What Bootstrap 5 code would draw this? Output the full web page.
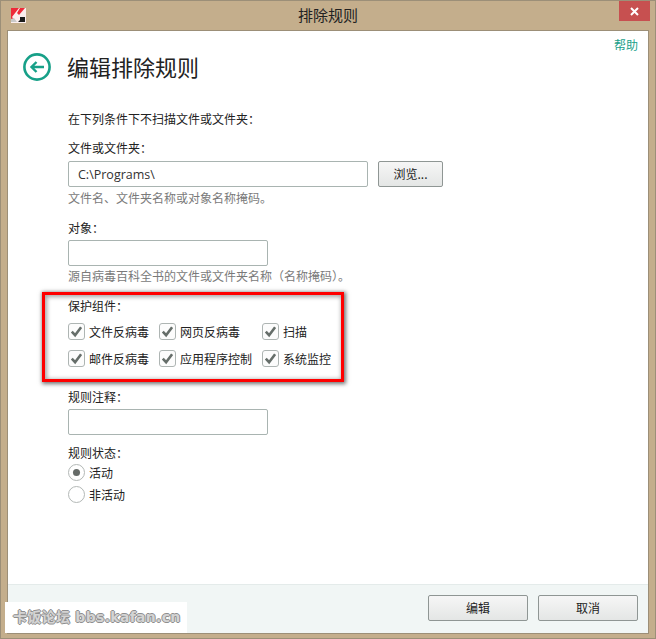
<!DOCTYPE html>
<html lang="zh">
<head>
<meta charset="utf-8">
<title>排除规则</title>
<link rel="stylesheet" href="https://cdn.jsdelivr.net/npm/bootstrap@5.3.0/dist/css/bootstrap.min.css">
<style>
  html, body { width: 656px; height: 639px; overflow: hidden; margin: 0; }
  body { font: 12px/16px "Noto Sans CJK SC", "Liberation Sans", sans-serif; color: #222; background: #c4ae8c; }
  .win-frame { position: relative; width: 656px; height: 639px; border: 1px solid #9c8f78; background: #c4ae8c; }
  .win-title { height: 29px; padding-left: 10px; }
  .win-title svg.logo { margin-top: 7px; }
  .win-title .cap { flex: 1; text-align: center; font-size: 15px; line-height: 27px; color: #222; padding-left: 11px; }
  .close-x { width: 31px; height: 20px; margin: 0 5px 0 0; background: #c75050; align-self: flex-start; }
  .client { width: 642px; height: 604px; margin-left: 6px; background: #fff; border: 1px solid #9c8f78; }
  .client-body { flex: 1; position: relative; padding: 0 10px 0 15px; }
  .help-link { color: #1a9f8a; text-decoration: none; line-height: 16px; padding-top: 6px; text-align: right; height: 22px; }
  .page-head { height: 28px; margin-top: 0; }
  .page-head h1 { font-size: 22px; font-weight: 400; line-height: 26px; margin: 0 0 2px 16px; color: #222; }
  .form-area { padding-left: 45px; }
  .lbl { height: 16px; margin: 0; display: block; font-family: "Noto Sans CJK TC", "Noto Sans CJK SC", sans-serif; }
  .in-box { height: 26px; width: 200px; border: 1px solid #a9b4b1; border-radius: 2px; padding: 0 9px; font-size: 12.5px; font-family: "Open Sans", sans-serif; color: #333; box-shadow: none; }
  .in-wide { width: 300px; }
  .hint { color: #7a7a7a; height: 16px; }
  .hint .paren { font-family: "Noto Sans CJK TC", sans-serif; }
  .win-btn { font-size: 12px; color: #222; border: 1px solid #8f9694; border-radius: 2px; background: linear-gradient(#f6f6f6, #e4e6e5); padding: 0; height: 26px; line-height: 24px; }
  .btn-browse { width: 65px; }
  .btn-foot { width: 100px; }
  .check-grid { display: grid; grid-template-columns: 91px 103px auto; row-gap: 10px; }
  .check-grid .form-check { min-height: 17px; padding: 0; margin: 0; gap: 4px; }
  .check-grid .form-check-input { width: 17px; height: 17px; margin: 0; float: none; border: 1px solid #aeb5b3; border-radius: 3px; background-color: #fcfcfc; background-image: url("data:image/svg+xml,%3Csvg xmlns='http://www.w3.org/2000/svg' viewBox='0 0 17 17'%3E%3Cpath d='M3.8 8.6l3.3 3.6 6-8' fill='none' stroke='%23666e6a' stroke-width='2.6'/%3E%3C/svg%3E"); background-size: 17px 17px; }
  .radio-row { min-height: 17px; padding: 0; margin: 0; gap: 4px; }
  .radio-row .form-check-input { width: 17px; height: 17px; margin: 0; float: none; border: 1px solid #b3b8b6; background-color: #fff; }
  .radio-row .form-check-input:checked { background-color: #fff; border-color: #b3b8b6; background-image: url("data:image/svg+xml,%3Csvg xmlns='http://www.w3.org/2000/svg' viewBox='0 0 17 17'%3E%3Ccircle cx='8.5' cy='8.5' r='4' fill='%23666b68'/%3E%3C/svg%3E"); }
  .foot-bar { height: 49px; background: #f1f6f5; border-top: 1px solid #e4ebea; padding: 10px 10px 0 0; }
  .mark-box { position: absolute; left: 41px; top: 291px; width: 302px; height: 90px; border: 3px solid #f00; box-shadow: 1px 1px 4px 1px rgba(0,0,0,.55), inset 1px 1px 4px 1px rgba(0,0,0,.35); pointer-events: none; }
  .wm { position: absolute; left: 4px; top: 601px; width: 182px; height: 31px; background: #fff; color: #d4d4d4; font: 700 14px/31px "DejaVu Sans", "Noto Sans CJK SC", sans-serif; letter-spacing: .3px; padding-left: 8px; white-space: nowrap; text-shadow: 1px 0 #8f8f8f, -1px 0 #8f8f8f, 0 1px #8f8f8f, 0 -1px #8f8f8f; }
</style>
</head>
<body>
<div class="win-frame d-flex flex-column">
  <div class="win-title d-flex">
    <svg class="logo" width="15" height="15" viewBox="0 0 15 15">
      <rect width="15" height="15" fill="#fbeeee"/>
      <path d="M0 0h8L1 9 5 14H0z" fill="#ee2a39"/>
      <path d="M9 0h5L8 7 6 5z" fill="#ee2a39"/>
      <path d="M0 11l3-1 3 4H0z" fill="#c9c9c9"/>
      <path d="M9 9h5v5H7l2-2z" fill="#1c1c1c"/>
    </svg>
    <div class="cap">排除规则</div>
    <div class="close-x d-flex align-items-center justify-content-center">
      <svg width="9" height="9" viewBox="0 0 9 9"><path d="M1 1l7 7M8 1L1 8" stroke="#fff" stroke-width="2"/></svg>
    </div>
  </div>
  <div class="client d-flex flex-column">
    <div class="client-body d-flex flex-column">
      <a class="help-link" href="#">帮助</a>
      <div class="page-head d-flex align-items-center">
        <svg width="28" height="28" viewBox="0 0 28 28">
          <circle cx="14" cy="14" r="12.6" fill="none" stroke="#17a088" stroke-width="2.6"/>
          <path d="M21 14H9M13.5 9l-5 5 5 5" fill="none" stroke="#17a088" stroke-width="2.4"/>
        </svg>
        <h1>编辑排除规则</h1>
      </div>
      <div class="form-area">
        <div class="lbl" style="margin-top:30px">在下列条件下不扫描文件或文件夹：</div>
        <label class="lbl" style="margin-top:13px">文件或文件夹：</label>
        <div class="d-flex" style="gap:10px;margin-top:5px">
          <input class="form-control in-box in-wide" type="text" value="C:\Programs\">
          <button class="btn win-btn btn-browse" type="button">浏览...</button>
        </div>
        <div class="hint" style="margin-top:3px">文件名、文件夹名称或对象名称掩码。</div>
        <label class="lbl" style="margin-top:14px">对象：</label>
        <input class="form-control in-box" style="margin-top:4px" type="text">
        <div class="hint" style="margin-top:2px">源自病毒百科全书的文件或文件夹名称<span class="paren">（名称掩码）</span>。</div>
        <label class="lbl" style="margin-top:14px">保护组件：</label>
        <div class="check-grid" style="margin-top:9px">
          <div class="form-check d-flex align-items-center"><input class="form-check-input" type="checkbox" checked><label class="form-check-label">文件反病毒</label></div>
          <div class="form-check d-flex align-items-center"><input class="form-check-input" type="checkbox" checked><label class="form-check-label">网页反病毒</label></div>
          <div class="form-check d-flex align-items-center"><input class="form-check-input" type="checkbox" checked><label class="form-check-label">扫描</label></div>
          <div class="form-check d-flex align-items-center"><input class="form-check-input" type="checkbox" checked><label class="form-check-label">邮件反病毒</label></div>
          <div class="form-check d-flex align-items-center"><input class="form-check-input" type="checkbox" checked><label class="form-check-label">应用程序控制</label></div>
          <div class="form-check d-flex align-items-center"><input class="form-check-input" type="checkbox" checked><label class="form-check-label">系统监控</label></div>
        </div>
        <label class="lbl" style="margin-top:22px">规则注释：</label>
        <input class="form-control in-box" style="margin-top:4px" type="text">
        <label class="lbl" style="margin-top:10px">规则状态：</label>
        <div class="form-check radio-row d-flex align-items-center" style="margin-top:3px"><input class="form-check-input" type="radio" name="st" checked><label class="form-check-label">活动</label></div>
        <div class="form-check radio-row d-flex align-items-center" style="margin-top:5px"><input class="form-check-input" type="radio" name="st"><label class="form-check-label">非活动</label></div>
      </div>
    </div>
    <div class="foot-bar d-flex justify-content-end" style="gap:10px">
      <button class="btn win-btn btn-foot" type="button">编辑</button>
      <button class="btn win-btn btn-foot" type="button">取消</button>
    </div>
  </div>
  <div class="mark-box"></div>
  <div class="wm">卡饭论坛 bbs.kafan.cn</div>
</div>
<script src="https://cdn.jsdelivr.net/npm/bootstrap@5.3.0/dist/js/bootstrap.bundle.min.js"></script>
</body>
</html>
